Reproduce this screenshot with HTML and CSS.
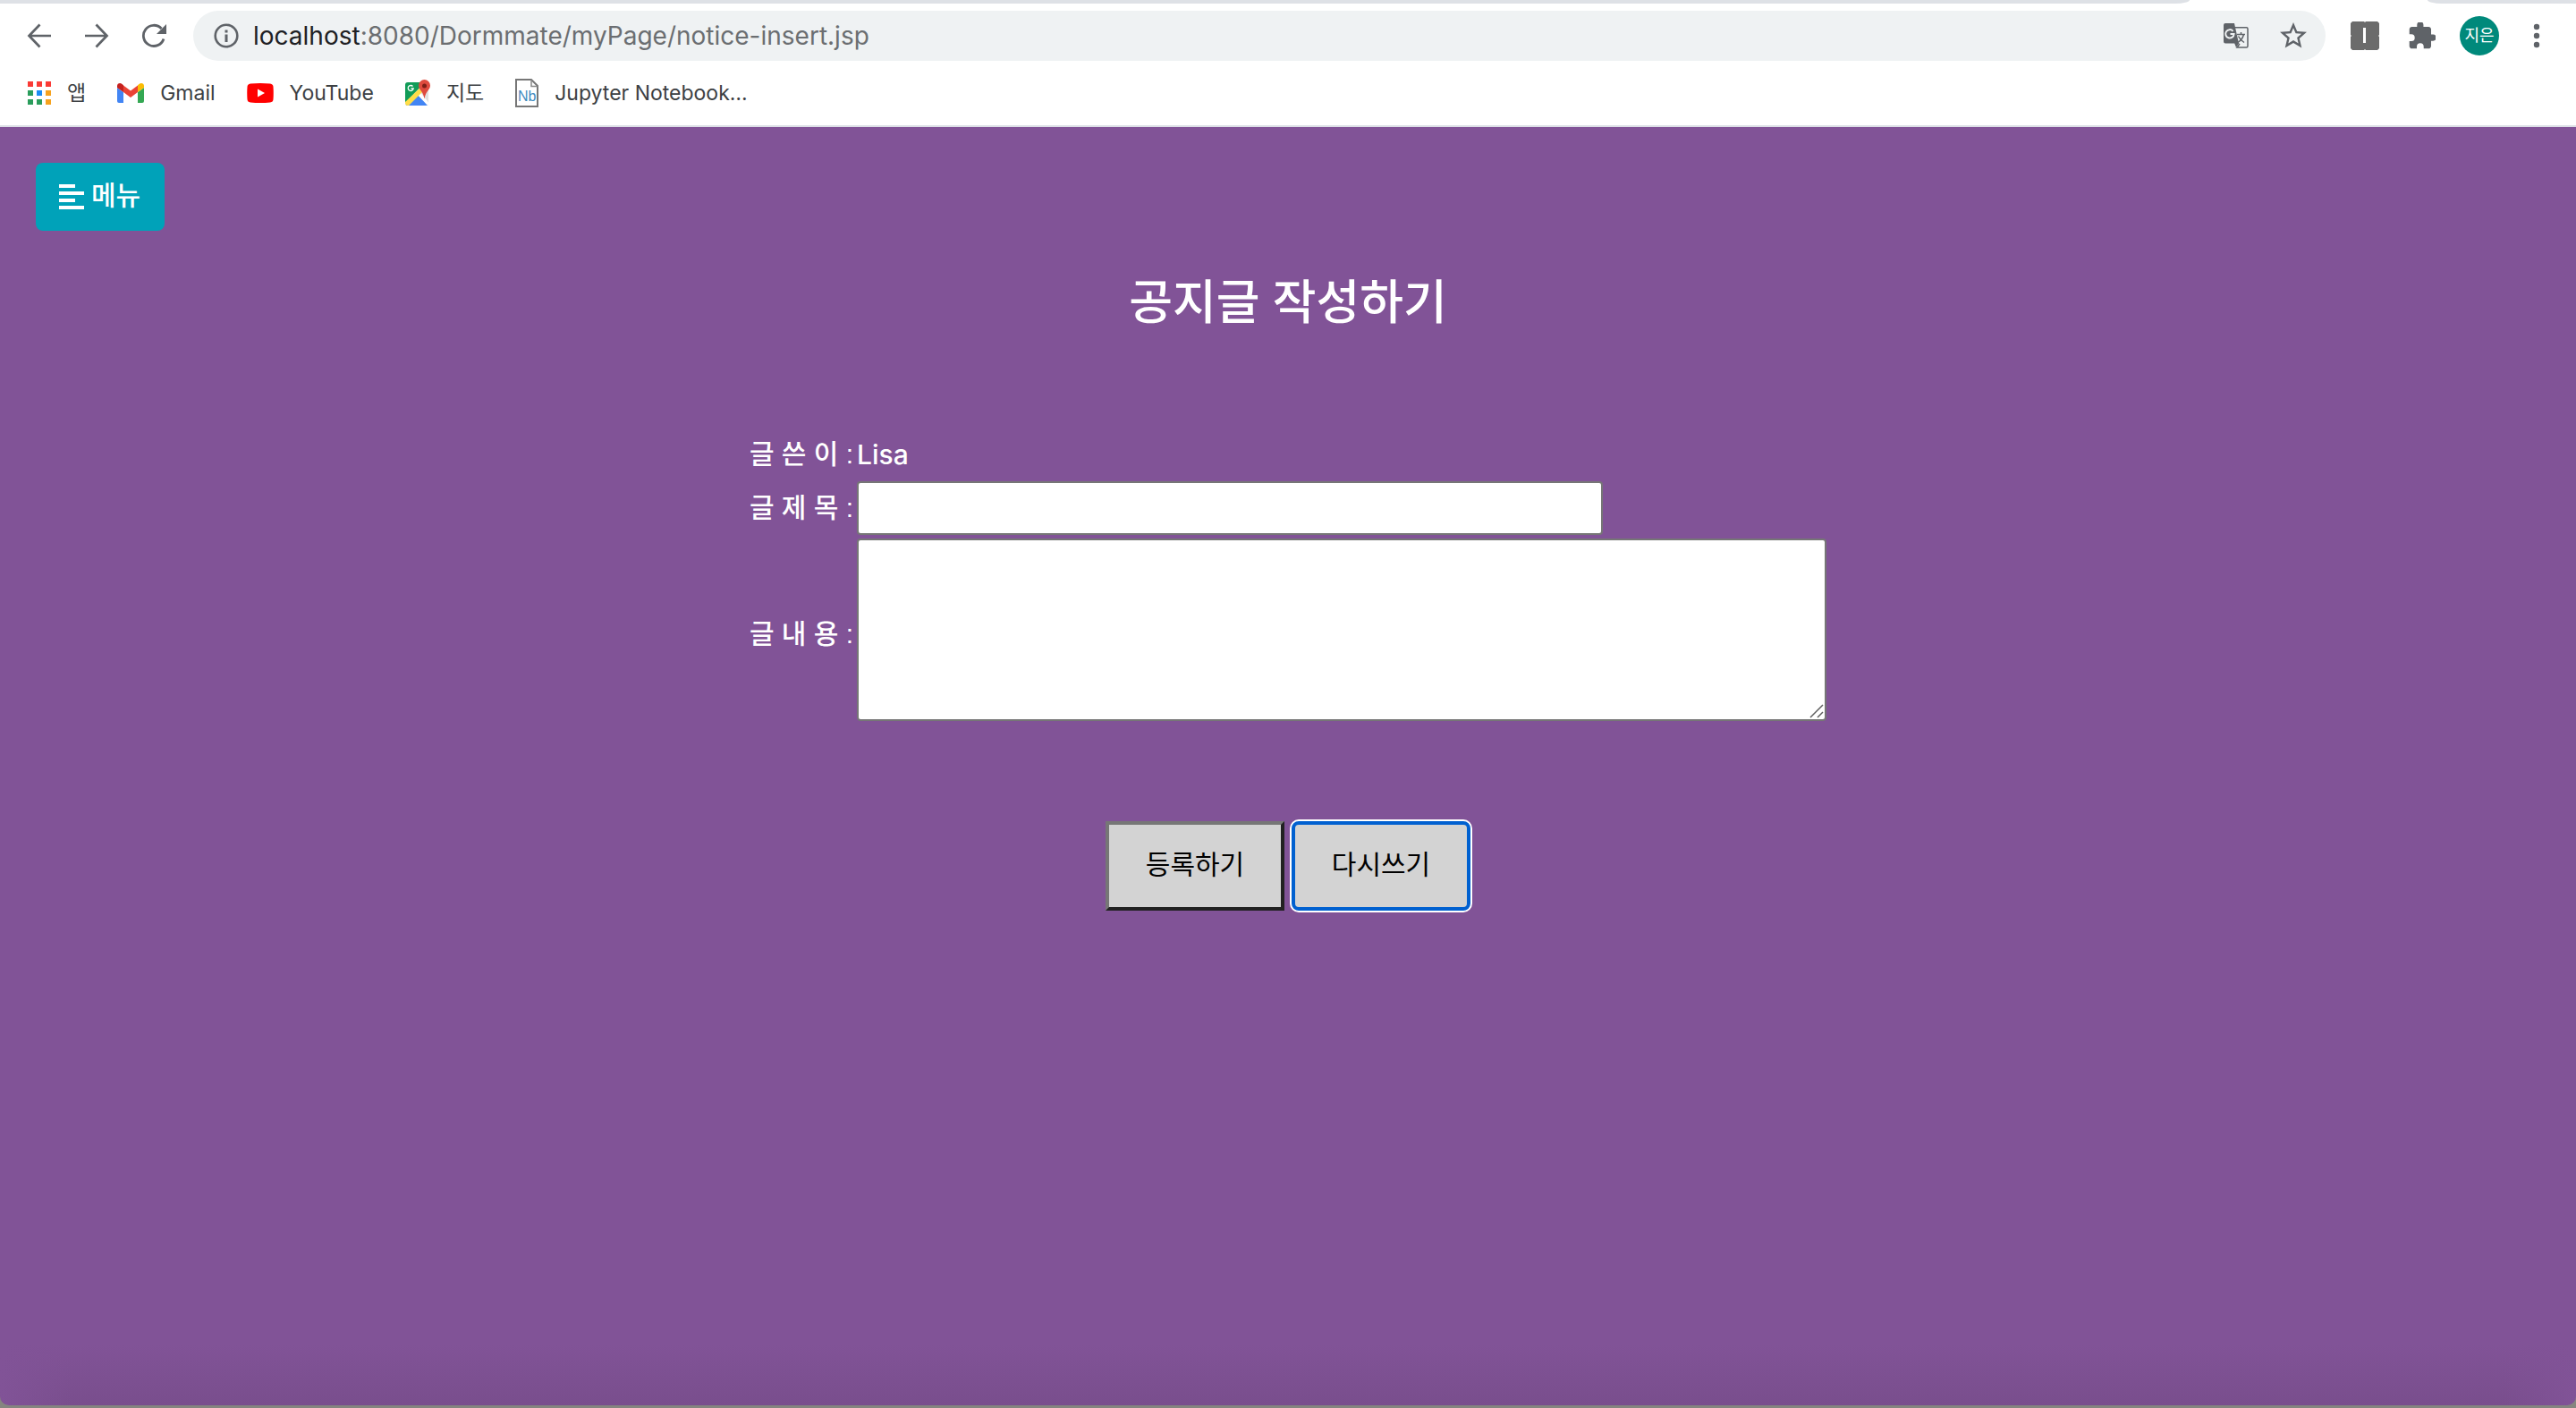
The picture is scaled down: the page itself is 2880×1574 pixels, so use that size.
FILE: index.html
```html
<!DOCTYPE html>
<html lang="ko">
<head>
<meta charset="utf-8">
<title>공지글 작성하기</title>
<link rel="stylesheet" href="styles.css">
</head>
<body>
<header class="browser">
  <div class="tabs"><span class="tab-left"></span><span class="tab-right"></span></div>
  <div class="toolbar">
    <button class="tool" type="button" aria-label="뒤로"><svg width="28" height="28" viewBox="0 0 28 28" fill="none" stroke="#5f6368" stroke-width="2.7"><path d="M27 14H3M14.500 1.500L2.500 14l12 12.500"/></svg></button>
    <button class="tool" type="button" aria-label="앞으로"><svg width="28" height="28" viewBox="0 0 28 28" fill="none" stroke="#5f6368" stroke-width="2.7"><path d="M1 14h24M13.500 1.500l12 12.500-12 12.500"/></svg></button>
    <button class="tool" type="button" aria-label="새로고침"><svg width="28" height="28" viewBox="0 0 28 28"><path d="M25 17.500A11.600 11.600 0 1 1 22.500 6" fill="none" stroke="#5f6368" stroke-width="2.800"/><path d="M28 1v11H17z" fill="#5f6368"/></svg></button>
    <div class="omnibox">
      <svg width="28" height="28" viewBox="0 0 28 28"><circle cx="14" cy="14" r="12.300" fill="none" stroke="#5f6368" stroke-width="2.600"/><path d="M12.500 7.500h3v3h-3zM12.500 12.500h3V21h-3z" fill="#5f6368"/></svg>
      <span class="url"><span class="host">localhost</span>:8080/Dormmate/myPage/notice-insert.jsp</span>
      <button class="tool" type="button" aria-label="번역"><svg width="28" height="28" viewBox="0 0 28 28"><path d="M13 4.800h12.500a1.500 1.500 0 0 1 1.500 1.500v19.200a1.500 1.500 0 0 1-1.500 1.500H15l3-4" fill="none" stroke="#5f6368" stroke-width="1.500"/><path d="M2 0h10l5 22.500H2a2 2 0 0 1-2-2V2a2 2 0 0 1 2-2zM12 22h5.500L14 27z" fill="#5f6368"/><path d="M10.500 8.800A4.700 4.700 0 1 0 11.600 12H7.500" fill="none" stroke="#eff2f3" stroke-width="2"/><path d="M15 12.500h9M19.500 10v2.500M22.500 12.500c-1 4-3.500 7-6.500 9M16.500 14.500c1.500 3 3.500 5 6.500 7" fill="none" stroke="#5f6368" stroke-width="1.500"/></svg></button>
      <button class="tool" type="button" aria-label="북마크 추가"><svg width="30" height="30" viewBox="2 2 20 20"><path fill="#5f6368" d="M22 9.240l-7.190-.62L12 2 9.190 8.630 2 9.240l5.460 4.730L5.820 21 12 17.270 18.180 21l-1.630-7.030L22 9.240zM12 15.400l-3.760 2.270 1-4.280-3.320-2.880 4.380-.38L12 6.100l1.710 4.040 4.380.38-3.320 2.880 1 4.280L12 15.400z"/></svg></button>
    </div>
    <button class="tool" type="button" aria-label="확장 프로그램 I"><svg width="32" height="32" viewBox="0 0 32 32"><path fill="#6b6b6b" d="M2 0h13l1 1 1-1h13l2 2v13l-1 1 1 1v13l-2 2H17l-1-1-1 1H2l-2-2V17l1-1-1-1V2z"/><path fill="#fff" d="M14 7h3v17h-3z"/></svg></button>
    <button class="tool" type="button" aria-label="확장 프로그램"><svg width="30" height="30" viewBox="1.500 1.500 21 21"><path fill="#5f6368" d="M20.500 11H19V7c0-1.100-.9-2-2-2h-4V3.500a2.500 2.500 0 0 0-5 0V5H4c-1.100 0-1.990.9-1.990 2v3.800H3.500a2.700 2.700 0 0 1 0 5.400H2V20c0 1.100.9 2 2 2h3.800v-1.500a2.700 2.700 0 0 1 5.400 0V22H17c1.100 0 2-.9 2-2v-4h1.500a2.500 2.500 0 0 0 0-5z"/></svg></button>
    <button class="tool" type="button"><span class="avatar">지은</span></button>
    <button class="tool" type="button" aria-label="더보기"><svg width="8" height="28" viewBox="0 0 8 28" fill="#5f6368"><circle cx="4" cy="4" r="3.200"/><circle cx="4" cy="14" r="3.200"/><circle cx="4" cy="24" r="3.200"/></svg></button>
  </div>
  <nav class="bookmarks">
    <a href="#apps"><svg width="26" height="26" viewBox="0 0 26 26"><path fill="#fa3a35" d="M0 0h6v6H0zM10 0h6v6h-6zM20 0h6v6h-6z"/><path fill="#2a9d5c" d="M0 10h6v6H0zM0 20h6v6H0zM10 20h6v6h-6z"/><path fill="#1a8cf5" d="M10 10h6v6h-6z"/><path fill="#f6a21e" d="M20 10h6v6h-6zM20 20h6v6h-6z"/></svg>앱</a>
    <a href="#gmail"><svg width="30" height="22" viewBox="0 0 30 22"><path fill="#4285f4" d="M0 5l7 5v12H2a2 2 0 0 1-2-2z"/><path fill="#34a853" d="M23 10l7-5v15a2 2 0 0 1-2 2h-5z"/><path fill="#ea4335" d="M7 2.500l8 6 8-6V10l-8 6-8-6z"/><path fill="#c5221f" d="M0 3C0 .5 3-1 5.500 1L7 2.300V10L0 5z"/><path fill="#fbbc04" d="M30 3c0-2.500-3-4-5.500-2L23 2.300V10l7-5z"/></svg>Gmail</a>
    <a href="#youtube"><svg width="30" height="22" viewBox="0 0 30 22"><path fill="#f00" d="M4 .500Q15-.500 26 .500 29.500 1 29.500 4 30 11 29.500 18 29.500 21 26 21.500 15 22.500 4 21.500.500 21 .500 18 0 11 .500 4 .500 1 4 .500z"/><path fill="#fff" d="M12 6.500v9l8-4.500z"/></svg>YouTube</a>
    <a href="#maps"><svg width="28" height="30" viewBox="0 0 28 30"><defs><clipPath id="map"><rect y="3" width="26" height="26" rx="3"/></clipPath></defs><g clip-path="url(#map)"><path fill="#e0e0e0" d="M0 3h28v27H0z"/><path fill="#119c58" d="M0 3h22L0 26z"/><path fill="#4285f4" d="M13 16L0 29h26z"/><path fill="#fff" d="M13 16l3-3 12 15-2 2z"/><path fill="#ffdd48" d="M18 8l3 4L4 29H0v-4z"/></g><path d="M8.500 7.500A3 3 0 1 0 9.200 10H6.500" fill="none" stroke="#fff" stroke-width="1.300"/><path fill="#df4b3f" d="M21.500 0a6.500 6.500 0 0 1 6.500 6.500c0 5-5 6-6.500 15-1.500-9-6.500-10-6.500-15A6.500 6.500 0 0 1 21.500 0z"/><circle cx="21.500" cy="7" r="2.500" fill="#7c1f18"/></svg>지도</a>
    <a href="#jupyter"><svg width="26" height="32" viewBox="0 0 26 32"><path d="M1 1h17l7 7v23H1z" fill="#fff" stroke="#777" stroke-width="2"/><path d="M18 1v7.500h7" fill="none" stroke="#888" stroke-width="1.500"/><text x="3" y="25" class="nb">Nb</text></svg>Jupyter Notebook…</a>
  </nav>
</header>
<main class="page">
  <button class="menu" type="button"><svg width="28" height="30" viewBox="0 0 28 30" fill="#fff"><path d="M0 1h18v4H0zM0 9h28v4H0zM0 17h18v4H0zM0 25h28v4H0z"/></svg><span>메뉴</span></button>
  <h1>공지글 작성하기</h1>
  <form class="notice">
    <table>
      <tr><th scope="row">글 쓴 이 :</th><td>Lisa</td></tr>
      <tr><th scope="row"><label for="subject">글 제 목 :</label></th><td><input id="subject" type="text"></td></tr>
      <tr class="content"><th scope="row"><label for="content">글 내 용 :</label></th><td><div class="area"><textarea id="content"></textarea><svg class="grip" width="16" height="16" viewBox="0 0 16 16" stroke="#5f5f5f" stroke-width="1.500"><path d="M1 15L15 1M9 15l6-6"/></svg></div></td></tr>
    </table>
    <div class="actions"><button type="submit">등록하기</button><button class="focused" type="reset">다시쓰기</button></div>
  </form>
</main>
</body>
</html>
```
FILE: styles.css
```css
* { box-sizing: border-box; }
body {
  margin: 0;
  min-height: 100vh;
  display: flex;
  flex-direction: column;
  padding-bottom: 3px;
  background: #85857f;
  font-family: "Inter", "Noto Sans CJK KR", sans-serif;
}
button { font-family: inherit; cursor: pointer; }
svg { display: block; flex: none; }

.browser { background: #fff; border-bottom: 2px solid #dcdfe6; }
.tabs { display: flex; justify-content: space-between; height: 4px; }
.tab-left, .tab-right { background: #dee1e6; }
.tab-left { width: 85%; border-bottom-right-radius: 16px 4px; }
.tab-right { width: 166px; border-bottom-left-radius: 16px 4px; }

.toolbar { display: flex; align-items: center; height: 72px; padding: 0 12px; }
.tool {
  width: 64px;
  height: 56px;
  display: flex;
  align-items: center;
  justify-content: center;
  padding: 0;
  border: 0;
  background: none;
}
.omnibox {
  flex: 1;
  display: flex;
  align-items: center;
  height: 56px;
  margin: 0 12px;
  padding: 0 4px 0 23px;
  border-radius: 28px;
  background: #eff2f3;
}
.url { flex: 1; padding-left: 16px; font-size: 28px; color: #6b6e71; }
.host { color: #202124; }
.avatar {
  width: 44px;
  height: 44px;
  border-radius: 50%;
  background: #00897b;
  color: #fff;
  font-size: 18px;
  line-height: 44px;
}

.bookmarks {
  display: flex;
  align-items: center;
  gap: 35px;
  height: 64px;
  padding: 0 31px 8px;
}
.bookmarks a {
  display: flex;
  align-items: center;
  gap: 18px;
  color: #3c4043;
  font-size: 23px;
  line-height: 32px;
  text-decoration: none;
}
.nb { font: 16px "Liberation Sans", sans-serif; fill: #3d8abf; }

.page {
  flex: 1;
  padding: 40px;
  border-radius: 0 0 10px 10px;
  background:
    linear-gradient(to right, #815397, #81539700 80px, #81539700 calc(100% - 80px), #815397),
    linear-gradient(to top, #794e8d, #815397 68px);
  color: #fff;
  font-size: 30px;
}
.menu {
  display: flex;
  align-items: center;
  gap: 8px;
  width: 144px;
  height: 76px;
  padding: 0 26px;
  border: 0;
  border-radius: 8px;
  background: #00a2b9;
  color: #fff;
  font-size: 30px;
  font-weight: 500;
  white-space: nowrap;
}
.menu span { padding-bottom: 8px; }
h1 {
  margin: 46px 0 108px;
  font-size: 53px;
  line-height: 68px;
  font-weight: 500;
  text-align: center;
}
table { margin: 0 auto; border-collapse: collapse; }
th, td { height: 56px; padding: 2px; text-align: left; font-weight: 500; line-height: 48px; }
th { font-family: "Liberation Sans", "Noto Sans CJK KR", sans-serif; white-space: nowrap; }
input, textarea {
  display: block;
  margin: 0;
  padding: 4px 8px;
  border: 2px solid #767676;
  border-radius: 4px;
  background: #fff;
  font: inherit;
}
input { width: 834px; height: 60px; }
textarea { width: 1084px; height: 204px; resize: none; }
.content td { padding-bottom: 12px; }
.area { position: relative; }
.grip { position: absolute; right: 3px; bottom: 3px; pointer-events: none; }

.actions { display: flex; justify-content: center; gap: 8px; margin-top: 100px; }
.actions button {
  width: 200px;
  height: 100px;
  padding: 0 0 8px;
  border: 4px solid;
  border-color: #767676 #212121 #212121 #767676;
  background: #d3d3d3;
  color: #000;
  font-size: 30px;
}
.actions .focused {
  border-color: #0060d0;
  border-radius: 8px;
  box-shadow: 0 0 0 2px #fff;
}
```
